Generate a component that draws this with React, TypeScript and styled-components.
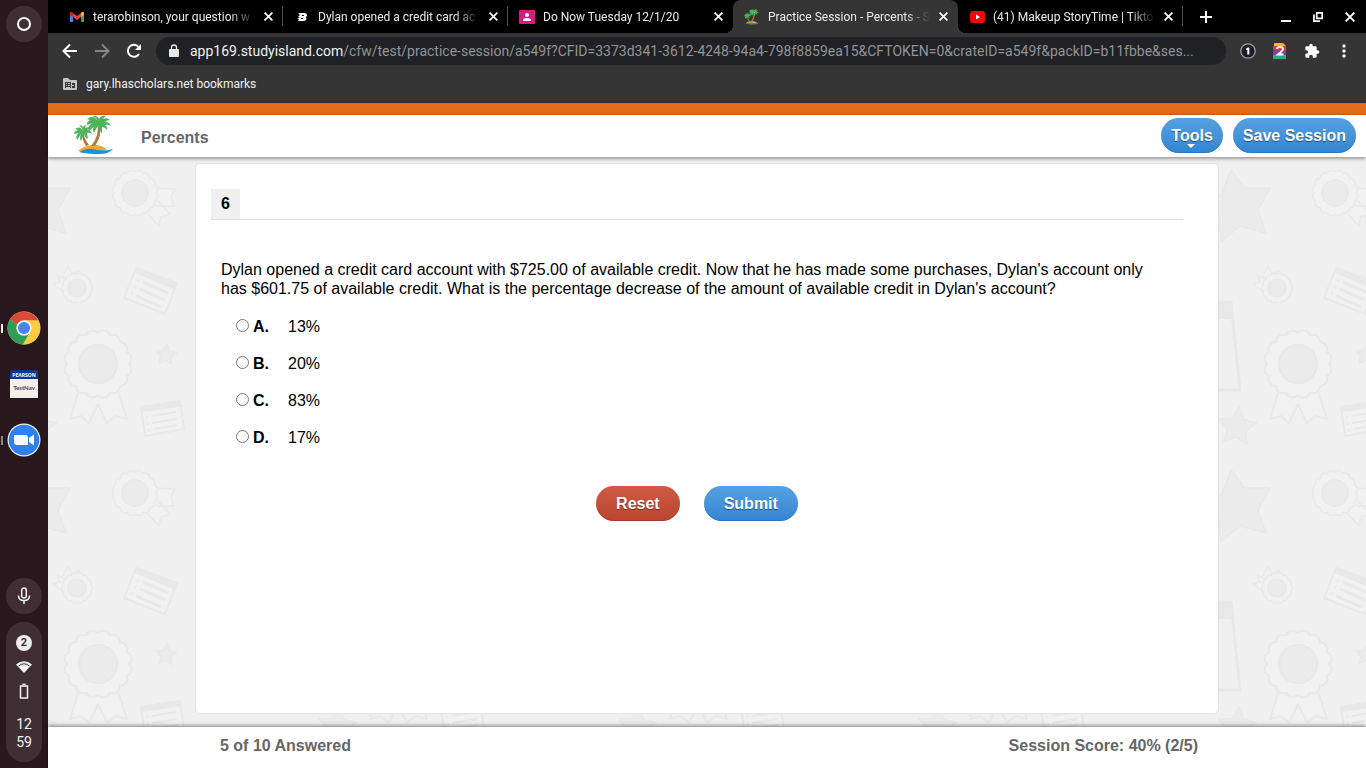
import React from "react";
import styled, { createGlobalStyle, css } from "styled-components";

const GlobalStyle = createGlobalStyle`
  *, *::before, *::after { box-sizing: border-box; }
  body { margin: 0; background: #f0f0f0; font-family: "Liberation Sans", Arial, sans-serif; font-size: 16px; color: #000; }
  button { font: inherit; color: inherit; border: 0; background: none; padding: 0; cursor: pointer; }
  svg { display: block; flex: none; }
`;

const Desktop = styled.div`
  display: grid;
  grid-template-columns: 48px minmax(0, 1fr);
  min-height: 100vh;
`;

/* ---------- system shelf ---------- */

const Shelf = styled.nav`
  display: flex;
  flex-direction: column;
  align-items: center;
  justify-content: space-between;
  padding: 6px 0;
  background: #28181d;
  font-family: Roboto, sans-serif;
`;

const RoundButton = styled.button`
  display: grid;
  place-items: center;
  width: 36px;
  height: 36px;
  border-radius: 18px;
  background: #3f2f34;
  color: #f4f1f2;
`;

const Apps = styled.div`
  display: flex;
  flex-direction: column;
  width: 100%;
  gap: 20px;
  padding-top: 148px;
`;

const AppButton = styled.button<{ $mark: string }>`
  display: grid;
  grid-template-columns: 3px 42px;
  align-items: center;
  justify-items: center;
  height: 36px;

  &::before {
    content: "";
    width: 2px;
    height: 9px;
    margin-left: 1px;
    justify-self: start;
    background: ${(p) => p.$mark};
  }
`;

const ShelfEnd = styled.div`
  display: flex;
  flex-direction: column;
  gap: 8px;
`;

const StatusTray = styled.button`
  display: flex;
  flex-direction: column;
  align-items: center;
  gap: 8px;
  width: 36px;
  height: 140px;
  padding-top: 13px;
  border-radius: 18px;
  background: #3f2f34;
  color: #f4f1f2;
`;

const Count = styled.span`
  width: 16px;
  height: 16px;
  border-radius: 8px;
  background: #f1eeef;
  color: #3f2f34;
  font-size: 11px;
  font-weight: 700;
  line-height: 16px;
`;

const Clock = styled.span`
  padding-top: 8px;
  font-size: 14px;
  line-height: 18px;
`;

/* ---------- browser chrome ---------- */

const Browser = styled.div`
  display: flex;
  flex-direction: column;
  min-width: 0;
`;

const TabStrip = styled.div`
  display: flex;
  height: 33px;
  padding-left: 10px;
  background: #000;
  color: #e9eaeb;
  font: 12px/16px Roboto, sans-serif;
`;

const TabBox = styled.div<{ $active?: boolean; $rule?: boolean }>`
  position: relative;
  display: flex;
  align-items: center;
  flex: 0 1 225px;
  min-width: 0;
  padding: 0 7px 0 11px;

  ${(p) =>
    p.$active &&
    css`
      border-radius: 8px 8px 0 0;
      background: #353535;

      &::before,
      &::after {
        content: "";
        position: absolute;
        bottom: 0;
        width: 8px;
        height: 8px;
      }
      &::before {
        right: 100%;
        background: radial-gradient(circle at 0 0, #000 8px, #353535 8px);
      }
      &::after {
        left: 100%;
        background: radial-gradient(circle at 100% 0, #000 8px, #353535 8px);
      }
    `}

  ${(p) =>
    p.$rule &&
    css`
      &::after {
        content: "";
        position: absolute;
        right: 0;
        top: 6px;
        width: 1px;
        height: 20px;
        background: #4c4e50;
      }
    `}
`;

const TabTitle = styled.button`
  flex: 1;
  min-width: 0;
  margin: 0 5px 0 8px;
  overflow: hidden;
  text-align: left;
  white-space: nowrap;
  mask-image: linear-gradient(to right, #000 calc(100% - 26px), transparent);
`;

const TabClose = styled.button`
  display: grid;
  place-items: center;
  width: 16px;
  height: 16px;
`;

const NewTab = styled(TabClose)`
  width: 24px;
  height: 33px;
  margin-left: 11px;
`;

const WindowButtons = styled.div`
  display: flex;
  align-items: center;
  gap: 16px;
  margin-left: auto;
  padding-right: 8px;
`;

const Toolbar = styled.div`
  display: flex;
  align-items: center;
  gap: 16px;
  height: 36px;
  padding: 0 14px;
  background: #353535;
  color: #fff;
`;

const ToolButton = styled.button<{ $dim?: boolean }>`
  display: grid;
  place-items: center;
  width: 16px;
  height: 24px;
  color: ${(p) => (p.$dim ? "#858585" : "#fff")};
`;

const Address = styled.label`
  display: flex;
  align-items: center;
  flex: 1;
  min-width: 0;
  height: 28px;
  margin: 0 -2px 0 -2px;
  padding: 0 20px 0 12px;
  border-radius: 14px;
  background: #202124;
  font: 14px/20px Roboto, sans-serif;
`;

const Host = styled.span`
  padding-left: 10px;
  color: #f1f1f1;
`;

const PathInput = styled.input`
  flex: 1;
  min-width: 0;
  padding: 0;
  border: 0;
  outline: 0;
  background: none;
  color: #929497;
  font: inherit;
  text-overflow: ellipsis;
`;

const Bookmarks = styled.div`
  display: flex;
  align-items: center;
  height: 34px;
  padding: 0 15px 4px;
  border-bottom: 1px solid #3b2a22;
  background: #353535;
`;

const BookmarkLink = styled.a`
  display: flex;
  align-items: center;
  gap: 9px;
  color: #f0f0f0;
  font: 12px/16px Roboto, sans-serif;
  text-decoration: none;
`;

/* ---------- practice page ---------- */

const Page = styled.div`
  display: flex;
  flex-direction: column;
  flex: 1;
  border-top: 12px solid #e36e1a;
`;

const Header = styled.header`
  position: relative;
  z-index: 1;
  display: flex;
  align-items: center;
  gap: 10px;
  height: 42px;
  padding: 0 10px 2px 26px;
  background: #fff;
  box-shadow: 0 1px 4px rgba(0, 0, 0, 0.5);
`;

const Title = styled.h1`
  flex: 1;
  margin: 0;
  padding: 5px 0 0 17px;
  color: #666;
  font-size: 16px;
  line-height: 20px;
`;

const Pill = styled.button<{ $tone?: "red"; $wide?: boolean }>`
  position: relative;
  height: 35px;
  padding: 0 ${(p) => (p.$wide ? 20 : 10)}px;
  border-radius: 18px;
  background: ${(p) =>
    p.$tone === "red"
      ? "linear-gradient(#d05a45, #b9452f)"
      : "linear-gradient(#56a2e0, #3385d3)"};
  box-shadow: inset 0 -1px 0 rgba(0, 0, 0, 0.12);
  color: #fff;
  font-weight: 700;
  line-height: 35px;
  text-shadow: 0 1px 1px rgba(0, 0, 0, 0.45);
`;

const Caret = styled.span`
  position: absolute;
  bottom: 5px;
  left: 50%;
  margin-left: -5px;
  border: 4px solid transparent;
  border-top-color: #fff;
  border-bottom: 0;
`;

const Stage = styled.main`
  position: relative;
  display: flex;
  flex: 1;
  padding: 6px 20px 13px;
  background: #f0f0f0;
`;

const Backdrop = styled.svg`
  position: absolute;
  inset: 0;
  width: 100%;
  height: 100%;
`;

const Card = styled.form`
  position: relative;
  width: 100%;
  max-width: 1024px;
  margin: 0 auto;
  padding: 25px 35px 25px 15px;
  border: 1px solid #e4e4e4;
  border-radius: 5px;
  background: #fff;
`;

const NumberRow = styled.div`
  display: flex;
  border-bottom: 1px solid #e1e1e1;
`;

const QuestionNumber = styled.h2`
  margin: 0;
  padding: 0 10px;
  background: #f0f0f0;
  font-size: 16px;
  line-height: 30px;
`;

const Question = styled.p`
  max-width: 950px;
  margin: 40px 10px 0;
  line-height: 19px;
`;

const Choices = styled.div`
  display: flex;
  flex-direction: column;
  align-items: flex-start;
  gap: 17px;
  padding: 19px 0 0 25px;
`;

const Choice = styled.label`
  display: grid;
  grid-template-columns: 17px 35px auto;
  line-height: 20px;
`;

const Radio = styled.input`
  width: 13px;
  height: 13px;
  margin: 2px 0 0;
`;

const Actions = styled.div`
  display: flex;
  justify-content: center;
  gap: 24px;
  padding-top: 38px;
`;

const Footer = styled.footer`
  position: relative;
  height: 41px;
  padding: 0 20px;
  background: #fff;
  box-shadow: 0 -1px 4px rgba(0, 0, 0, 0.5);
`;

const FooterRow = styled.div`
  display: flex;
  justify-content: space-between;
  max-width: 1024px;
  margin: 0 auto;
  padding: 0 21px 0 25px;
  color: #666;
  font-weight: 700;
  line-height: 37px;
`;

/* ---------- drawings ---------- */

function Palm({ size }: { size: number }) {
  return (
    <svg width={size} height={size} viewBox="0 0 40 40" aria-hidden="true">
      <path d="M4 36 Q10 30 20 30 Q29 30 33 35 L18 38Z" fill="#f0a830" />
      <path d="M5 37 Q12 33 19 34 Q28 37 39 34 Q35 39 25 39 Q13 39 5 37Z" fill="#1b93d0" />
      <path d="M8 17 Q8 25 12 31 L15 30 Q10 24 9 16Z" fill="#a9743e" />
      <path d="M23 9 Q26 20 17 31 L21 31 Q29 20 25 8Z" fill="#b07a40" />
      <path
        d="M24 6Q19-1 13 4L16 5Q12 7 13 10L18 8Q13 12 15 17L20 11Q18 14 20 18L24 10Q24 15 28 18L28 12Q31 12 33 15Q34 12 31 10Q34 9 37 11Q36 7 31 7Q33 5 36 5Q33 2 29 4Q30 2 32 1Q27 0 25 4Q23 0 18 1Q22 2 24 6Z"
        fill="#4db45c"
      />
      <path
        d="M9 16Q6 10 1 14L4 15Q0 16 0 19L5 18Q1 20 3 25L7 19Q5 23 7 26L10 19Q11 23 14 24L13 18Q15 17 18 19Q17 15 13 15Q15 13 17 14Q15 11 11 13Q11 11 13 10Q10 10 9 12Q8 10 5 10Q8 12 9 16Z"
        fill="#4db45c"
      />
    </svg>
  );
}

const Gmail = () => (
  <svg width="16" height="16" viewBox="0 0 16 16" aria-hidden="true">
    <path d="M1 4v9h3V7z" fill="#4285f4" />
    <path d="M12 7v6h3V4z" fill="#34a853" />
    <path d="M1 4Q1 2 3 3L4 4v4L1 6z" fill="#c5221f" />
    <path d="M4 4l4 3 4-3v4l-4 3-4-3z" fill="#ea4335" />
    <path d="M12 4l1-1q2-1 2 1v2l-3 2z" fill="#fbbc04" />
  </svg>
);

const Brainly = () => (
  <svg width="16" height="16" viewBox="0 0 16 16" aria-hidden="true">
    <path
      d="M4 4h6q3 0 3 2 0 1-1 2 1 1 0 3-1 1-3 1H4l1-2H3l3-2H4l2-2zM8 6v1h2V6zM7 9v1h2V9z"
      fill="#fff"
      fillRule="evenodd"
    />
  </svg>
);

const Classroom = () => (
  <svg width="16" height="16" viewBox="0 0 16 16" aria-hidden="true">
    <rect y="1" width="16" height="14" rx="1" fill="#d81b7f" />
    <circle cx="8" cy="6" r="2" fill="#fff" />
    <path d="M4 11q0-2 4-2t4 2v1H4z" fill="#fff" />
  </svg>
);

const YouTube = () => (
  <svg width="16" height="16" viewBox="0 0 16 16" aria-hidden="true">
    <rect x="1" y="2" width="15" height="12" rx="3" fill="#f00" />
    <path d="M7 5.500v5L11 8z" fill="#fff" />
  </svg>
);

const Cross = ({ size = 9 }: { size?: number }) => (
  <svg width={size} height={size} viewBox="0 0 8 8" stroke="#fff" strokeWidth="1.500" aria-hidden="true">
    <path d="M0.500 0.500l7 7M7.500 0.500l-7 7" />
  </svg>
);

const Arrow = ({ flip }: { flip?: boolean }) => (
  <svg width="16" height="16" viewBox="0 0 16 16" fill="none" stroke="currentColor" strokeWidth="2" aria-hidden="true">
    {flip ? <path d="M1 8h13M8 1.500L14.500 8 8 14.500" /> : <path d="M15 8H2M8 1.500L1.500 8 8 14.500" />}
  </svg>
);

function scallop(cx: number, cy: number, r: number, lobes: number) {
  const point = (i: number) => {
    const a = (i / lobes) * Math.PI * 2 - Math.PI / 2;
    return `${(cx + r * Math.cos(a)).toFixed(1)} ${(cy + r * Math.sin(a)).toFixed(1)}`;
  };
  const bump = ((Math.PI * r) / lobes) * 1.15;
  let d = `M${point(0)}`;
  for (let i = 1; i <= lobes; i += 1) d += `A${bump} ${bump} 0 0 1 ${point(i)}`;
  return `${d}Z`;
}

function star(cx: number, cy: number, r: number) {
  const pts: string[] = [];
  for (let i = 0; i < 10; i += 1) {
    const a = (i / 10) * Math.PI * 2 - Math.PI / 2 + 0.1;
    const q = i % 2 ? r * 0.5 : r;
    pts.push(`${(cx + q * Math.cos(a)).toFixed(1)},${(cy + q * Math.sin(a)).toFixed(1)}`);
  }
  return pts.join(" ");
}

const EdgeShapes = ({ x }: { x: number }) => (
  <g transform={`translate(${x} 0)`}>
    <path d="M-17 13L-3 31L22 31L10 53L18 76L-8 69L-27 85L-29 60L-47 46L-27 38Z" fill="#ebebeb" />
    <path d="M-80 145L-17 145L-8 233L-80 233" fill="none" strokeWidth="3" />
    <path d="M-80 145L-17 145L-15 162L-80 162Z" fill="#e8e8e8" stroke="none" />
    <polygon points={star(-11, 270, 20)} fill="#ebebeb" />
  </g>
);

const Pattern = () => (
  <Backdrop aria-hidden="true">
    <defs>
      <pattern id="awards" width="300" height="300" patternUnits="userSpaceOnUse">
        <g fill="#f1f1f1" stroke="#e8e8e8" strokeWidth="1.500" strokeLinejoin="round">
          <EdgeShapes x={0} />
          <EdgeShapes x={300} />

          <path d="M106 31L127 32L123 40L126 49L108 49M100 57L111 69L113 60L122 57L110 44" />
          <path d={scallop(87, 36, 21, 16)} />
          <circle cx="87" cy="36" r="13" fill="#ebebeb" />

          <path d="M19 138L5 127L12 125L9 118L18 122M15 119L20 109L24 117L31 113L33 122" />
          <path d={scallop(29, 131, 14, 14)} />
          <circle cx="29" cy="131" r="9" fill="#ebebeb" />

          <g strokeWidth="2">
            <path d="M30 236L22 262L33 259L41 266L50 247L59 266L67 259L79 262L70 234" />
            <path d={scallop(50, 207, 31, 16)} />
            <circle cx="50" cy="207" r="19" fill="#ebebeb" />
          </g>

          <path d="M88 111L129 126L117 157L76 141Z" strokeWidth="2" />
          <path d="M88 111L129 128L127 132L87 115Z" fill="#e8e8e8" />
          <path d="M95 125L120 136M92 132L117 143M88 139L113 150" strokeWidth="3" />
          <path d="M89 123l2 1M86 130l2 1M83 136l2 1" strokeWidth="3" />

          <polygon points={star(118, 198, 11)} fill="#ebebeb" />

          <path d="M93 250L132 244L136 272L97 279Z" strokeWidth="2" />
          <path d="M93 250L132 244L132 249L94 254Z" fill="#e8e8e8" />
          <path d="M104 259L128 255M104 266L129 262M105 272L130 268M98 260h2M99 267h2M100 273h2" strokeWidth="2" />
        </g>
      </pattern>
    </defs>
    <rect width="100%" height="100%" fill="url(#awards)" />
  </Backdrop>
);

/* ---------- data ---------- */

const tabs = [
  { title: "terarobinson, your question w", icon: <Gmail />, rule: true },
  { title: "Dylan opened a credit card ac", icon: <Brainly />, rule: true },
  { title: "Do Now Tuesday 12/1/20", icon: <Classroom /> },
  { title: "Practice Session - Percents - S", icon: <Palm size={16} />, active: true },
  { title: "(41) Makeup StoryTime | Tikto", icon: <YouTube />, rule: true },
];

const choices = [
  ["A.", "13%"],
  ["B.", "20%"],
  ["C.", "83%"],
  ["D.", "17%"],
];

export default function App() {
  return (
    <Desktop>
      <GlobalStyle />
      <Shelf aria-label="Shelf">
        <RoundButton aria-label="Launcher">
          <svg width="14" height="14" viewBox="0 0 14 14">
            <circle cx="7" cy="7" r="6" fill="none" stroke="#fff" strokeWidth="2" />
          </svg>
        </RoundButton>
        <Apps>
          <AppButton $mark="#fff" aria-label="Chrome">
            <svg width="34" height="34" viewBox="0 0 34 34">
              <circle cx="17" cy="17" r="16.500" fill="#fbcb43" />
              <path d="M17 17L2.700 8.700A16.500 16.500 0 0 1 31.300 9.500H17z" fill="#d94a3a" />
              <path d="M17 17L2.700 8.700A16.500 16.500 0 0 0 16 33.500L23 21z" fill="#2f9d58" />
              <path d="M17 9.500h14.300A16.500 16.500 0 0 1 16 33.500L23.500 21z" fill="#fbcb43" />
              <circle cx="17" cy="17" r="7.700" fill="#f4f4f4" />
              <circle cx="17" cy="17" r="6" fill="#4a85ee" />
            </svg>
          </AppButton>
          <AppButton $mark="transparent" aria-label="TestNav">
            <svg width="28" height="28" viewBox="0 0 28 28" textAnchor="middle">
              <path d="M0 0h28v9H0z" fill="#16348c" />
              <path d="M0 9h28v19H0z" fill="#f3f0ea" />
              <text x="14" y="7" fontFamily="Open Sans, sans-serif" fontSize="5" fontWeight="700" fill="#fff">PEARSON</text>
              <text x="14" y="20" fontFamily="Lato, sans-serif" fontSize="6" fontWeight="700" fill="#2f4470">TestNav</text>
            </svg>
          </AppButton>
          <AppButton $mark="#8d8386" aria-label="Zoom">
            <svg width="34" height="34" viewBox="0 0 34 34">
              <circle cx="17" cy="17" r="16.500" fill="#e8f0fa" />
              <circle cx="17" cy="17" r="15.300" fill="#2d80ee" />
              <path d="M7 12h11q3 0 3 3v7H10q-3 0-3-3zM22 15l5-3.500v11L22 19z" fill="#fff" />
            </svg>
          </AppButton>
        </Apps>
        <ShelfEnd>
          <RoundButton aria-label="Dictation">
            <svg width="14" height="18" viewBox="0 0 14 18" fill="none" stroke="currentColor" strokeWidth="1.500">
              <rect x="4.700" y="1" width="4.600" height="10" rx="2.300" />
              <path d="M1.500 8.500q0 5 5.500 5t5.500-5M7 13.500V17" />
            </svg>
          </RoundButton>
          <StatusTray aria-label="Status tray">
            <Count>2</Count>
            <svg width="16" height="16" viewBox="0 0 16 16">
              <path d="M0 5.500Q8-1 16 5.500L8 14z" fill="currentColor" />
              <path d="M2.500 7Q8 2.500 13.500 7" fill="none" stroke="#3f2f34" strokeWidth="1" />
            </svg>
            <svg width="10" height="16" viewBox="0 0 10 16" fill="none" stroke="currentColor" strokeWidth="1.500">
              <path d="M1.500 3h7v12h-7z" />
              <path d="M3.500 1.500h3" strokeWidth="2" />
            </svg>
            <Clock>
              12
              <br />
              59
            </Clock>
          </StatusTray>
        </ShelfEnd>
      </Shelf>

      <Browser>
        <TabStrip>
          {tabs.map((t) => (
            <TabBox key={t.title} $active={t.active} $rule={t.rule}>
              {t.icon}
              <TabTitle>{t.title}</TabTitle>
              <TabClose aria-label="Close tab">
                <Cross />
              </TabClose>
            </TabBox>
          ))}
          <NewTab aria-label="New tab">
            <svg width="12" height="12" viewBox="0 0 12 12" stroke="#fff" strokeWidth="2">
              <path d="M6 0v12M0 6h12" />
            </svg>
          </NewTab>
          <WindowButtons>
            <TabClose aria-label="Minimize">
              <svg width="10" height="10" viewBox="0 0 10 10">
                <path d="M0 8h10v2H0z" fill="#fff" />
              </svg>
            </TabClose>
            <TabClose aria-label="Restore">
              <svg width="10" height="10" viewBox="0 0 10 10" fill="none" stroke="#fff">
                <path d="M3.700 0.800h5.500v5.500H3.700z" strokeWidth="1.700" />
                <path d="M0.900 2.500v6.600h6" strokeWidth="1.700" />
              </svg>
            </TabClose>
            <TabClose aria-label="Close window">
              <Cross size={10} />
            </TabClose>
          </WindowButtons>
        </TabStrip>

        <Toolbar>
          <ToolButton aria-label="Back">
            <Arrow />
          </ToolButton>
          <ToolButton $dim aria-label="Forward">
            <Arrow flip />
          </ToolButton>
          <ToolButton aria-label="Reload">
            <svg width="16" height="16" viewBox="0 0 16 16">
              <path d="M13 11A6 6 0 1 1 12.500 4" fill="none" stroke="currentColor" strokeWidth="2" />
              <path d="M15 1v6H9z" fill="currentColor" />
            </svg>
          </ToolButton>
          <Address>
            <svg width="12" height="14" viewBox="0 0 12 14" aria-hidden="true">
              <path d="M2 5h8q1 0 1 1v6q0 1-1 1H2q-1 0-1-1V6q0-1 1-1z" fill="#e8e8e8" />
              <path d="M3.500 5V3.500a2.500 2.500 0 0 1 5 0V5" fill="none" stroke="#e8e8e8" strokeWidth="1.300" />
            </svg>
            <Host>app169.studyisland.com</Host>
            <PathInput
              aria-label="Address"
              defaultValue="/cfw/test/practice-session/a549f?CFID=3373d341-3612-4248-94a4-798f8859ea15&CFTOKEN=0&crateID=a549f&packID=b11fbbe&ses..."
            />
          </Address>
          <ToolButton aria-label="Password manager">
            <svg width="16" height="16" viewBox="0 0 16 16">
              <circle cx="8" cy="8" r="7.200" fill="#1b1d2a" stroke="#9fa1a8" strokeWidth="1.300" />
              <path d="M6 5.500L8 4.500h1.300v7H7.300V7H6z" fill="#fff" />
            </svg>
          </ToolButton>
          <ToolButton aria-label="Extension">
            <svg width="14" height="16" viewBox="0 0 14 16">
              <path d="M1 0h9l3 3v3H1z" fill="#f2b71f" />
              <path d="M0 3h13v4H0z" fill="#e5343c" />
              <path d="M0 7h13v5H0z" fill="#8a3fa8" />
              <path d="M0 12h13v4H0z" fill="#1fb08e" />
              <path d="M4 6q0-2 3-2t3 2q0 1.500-5 5.500H10.500" fill="none" stroke="#fff" strokeWidth="2" />
            </svg>
          </ToolButton>
          <ToolButton aria-label="Extensions">
            <svg width="16" height="16" viewBox="0 0 24 24" fill="currentColor">
              <path d="M20.500 11H19V7c0-1.100-.9-2-2-2h-4V3.500a2.500 2.500 0 0 0-5 0V5H4c-1.100 0-2 .9-2 2v3.800h1.500a2.700 2.700 0 0 1 0 5.400H2V20c0 1.100.9 2 2 2h3.800v-1.500a2.700 2.700 0 0 1 5.400 0V22H17c1.100 0 2-.9 2-2v-4h1.500a2.500 2.500 0 0 0 0-5z" />
            </svg>
          </ToolButton>
          <ToolButton aria-label="Menu">
            <svg width="4" height="14" viewBox="0 0 4 14" fill="currentColor">
              <circle cx="2" cy="2" r="1.700" />
              <circle cx="2" cy="7" r="1.700" />
              <circle cx="2" cy="12" r="1.700" />
            </svg>
          </ToolButton>
        </Toolbar>

        <Bookmarks>
          <BookmarkLink href="#bookmarks">
            <svg width="14" height="12" viewBox="0 0 14 12" aria-hidden="true">
              <path d="M0 1q0-1 1-1h4l2 2h6q1 0 1 1v8q0 1-1 1H1q-1 0-1-1z" fill="#c4c4c4" />
              <path d="M2 4h6v6H2zM9 5h3v5H9z" fill="#353535" />
              <path d="M3 5h1v1H3zM5 5h2v1H5zM3 7h1v1H3zM5 7h2v1H5zM3 9h4v1H3zM9 7h2v1H9z" fill="#c4c4c4" />
            </svg>
            gary.lhascholars.net bookmarks
          </BookmarkLink>
        </Bookmarks>

        <Page>
          <Header>
            <Palm size={40} />
            <Title>Percents</Title>
            <Pill type="button">
              Tools
              <Caret />
            </Pill>
            <Pill type="button">Save Session</Pill>
          </Header>

          <Stage>
            <Pattern />
            <Card onSubmit={(e: React.FormEvent) => e.preventDefault()}>
              <NumberRow>
                <QuestionNumber>6</QuestionNumber>
              </NumberRow>
              <Question id="question">
                Dylan opened a credit card account with $725.00 of available credit. Now that he has made
                some purchases, Dylan's account only has $601.75 of available credit. What is the
                percentage decrease of the amount of available credit in Dylan's account?
              </Question>
              <Choices role="radiogroup" aria-labelledby="question">
                {choices.map(([letter, value]) => (
                  <Choice key={letter}>
                    <Radio type="radio" name="answer" value={letter} />
                    <b>{letter}</b>
                    <span>{value}</span>
                  </Choice>
                ))}
              </Choices>
              <Actions>
                <Pill type="reset" $tone="red" $wide>
                  Reset
                </Pill>
                <Pill type="submit" $wide>
                  Submit
                </Pill>
              </Actions>
            </Card>
          </Stage>

          <Footer>
            <FooterRow>
              <span>5 of 10 Answered</span>
              <span>Session Score: 40% (2/5)</span>
            </FooterRow>
          </Footer>
        </Page>
      </Browser>
    </Desktop>
  );
}
